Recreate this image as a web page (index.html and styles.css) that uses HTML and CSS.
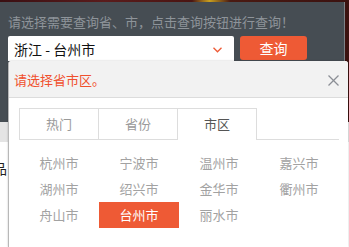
FILE: index.html
```html
<!DOCTYPE html>
<html lang="zh-CN">
<head>
  <meta charset="UTF-8">
  <title>省市查询</title>
  <link rel="stylesheet" href="styles.css">
</head>
<body>
  <div class="hero">
    <div class="panel">
      <p class="hint">请选择需要查询省、市，点击查询按钮进行查询！</p>
      <div class="search">
        <div class="select">
          <span>浙江 - 台州市</span>
          <svg class="chevron" width="9" height="6" viewBox="0 0 9 6">
            <polyline points="0.5,0.8 4.5,4.8 8.5,0.8" fill="none" stroke="#ee5a35" stroke-width="1.3"/>
          </svg>
        </div>
        <button class="btn">查询</button>
      </div>
    </div>
  </div>
  <div class="strip"></div>
  <div class="below"><span class="cut">品</span></div>

  <!-- city picker dropdown -->
  <div class="picker">
    <div class="picker-head">
      <span>请选择省市区。</span>
      <svg class="close" width="11" height="11" viewBox="0 0 11 11">
        <line x1="0.5" y1="0.5" x2="10.5" y2="10.5" stroke="#8b8f96" stroke-width="1.3"/>
        <line x1="10.5" y1="0.5" x2="0.5" y2="10.5" stroke="#8b8f96" stroke-width="1.3"/>
      </svg>
    </div>
    <div class="picker-body">
      <div class="tabs">
        <div class="tab">热门</div>
        <div class="tab">省份</div>
        <div class="tab active">市区</div>
      </div>
      <ul class="cities">
        <li>杭州市</li>
        <li>宁波市</li>
        <li>温州市</li>
        <li>嘉兴市</li>
        <li>湖州市</li>
        <li>绍兴市</li>
        <li>金华市</li>
        <li>衢州市</li>
        <li>舟山市</li>
        <li class="on">台州市</li>
        <li>丽水市</li>
      </ul>
    </div>
  </div>
</body>
</html>
```

FILE: styles.css
```css
* {
  box-sizing: border-box;
}

body {
  margin: 0;
  width: 349px;
  height: 247px;
  overflow: hidden;
  position: relative;
  background: #fff;
  font-family: "Noto Sans CJK SC", "Noto Sans", sans-serif;
  font-size: 13px;
}

.hero {
  height: 122px;
  padding: 2px 4px 0 0;
  background: linear-gradient(90deg, #3a0f12 0%, #5a1c1c 30%, #4a1512 55%, #c9a020 60%, #4a1a12 66%, #3b1210 100%);
}

.panel {
  height: 120px;
  background: #464d53;
  border-right: 1px solid #7d8287;
  padding: 10px 8px 0;
}

.hint {
  margin: 0;
  line-height: 20px;
  color: #8e949a;
}

.search {
  display: flex;
  align-items: flex-start;
  margin-top: 4px;
}

.select {
  width: 226px;
  height: 25px;
  background: #fff;
  border-radius: 2px 2px 0 0;
  display: flex;
  align-items: center;
  justify-content: space-between;
  padding: 0 12px 0 6px;
  color: #111;
  font-size: 14px;
}

.chevron {
  margin-top: 2px;
}

.btn {
  margin-left: 6px;
  width: 67px;
  height: 24px;
  border: none;
  border-radius: 3px;
  background: #ee5a35;
  color: #fff;
  font-family: inherit;
  font-size: 14px;
  padding: 0;
}

.strip {
  height: 20px;
  background: #e4e4e4;
}

.below {
  padding-top: 18px;
  line-height: 16px;
  font-size: 14px;
  color: #222;
}

.cut {
  margin-left: -7px;
}

.picker {
  position: absolute;
  top: 61px;
  left: 8px;
  width: 340px;
  bottom: 0;
  background: #fff;
  border-left: 1px solid #b8b8b8;
  border-radius: 3px 3px 0 0;
  box-shadow: 0 0 2px rgba(0, 0, 0, 0.25);
}

.picker-head {
  height: 37px;
  background: #f2f2f2;
  border-bottom: 1px solid #dcdcdc;
  border-radius: 3px 3px 0 0;
  display: flex;
  align-items: center;
  justify-content: space-between;
  padding: 0 9px 0 5px;
  color: #f0502e;
}

.close {
  margin-top: 2px;
}

.picker-body {
  padding: 10px 9px 0 10px;
}

.tabs {
  display: flex;
  align-items: flex-start;
  width: 320px;
  border-bottom: 1px solid #ddd;
}

.tab {
  width: 80px;
  height: 31px;
  line-height: 30px;
  text-align: center;
  border: 1px solid #ddd;
  border-bottom: none;
  color: #9a9a9a;
}

.tab + .tab {
  margin-left: -1px;
}

.tab.active {
  height: 32px;
  margin-bottom: -1px;
  background: #fff;
  color: #555;
}

.cities {
  list-style: none;
  margin: 10px 0 0;
  padding: 0;
  display: grid;
  grid-template-columns: repeat(4, 80px);
  grid-auto-rows: 26px;
}

.cities li {
  line-height: 26px;
  text-align: center;
  color: #a2a2a2;
}

.cities li.on {
  background: #ee5a35;
  color: #fff;
}
```
